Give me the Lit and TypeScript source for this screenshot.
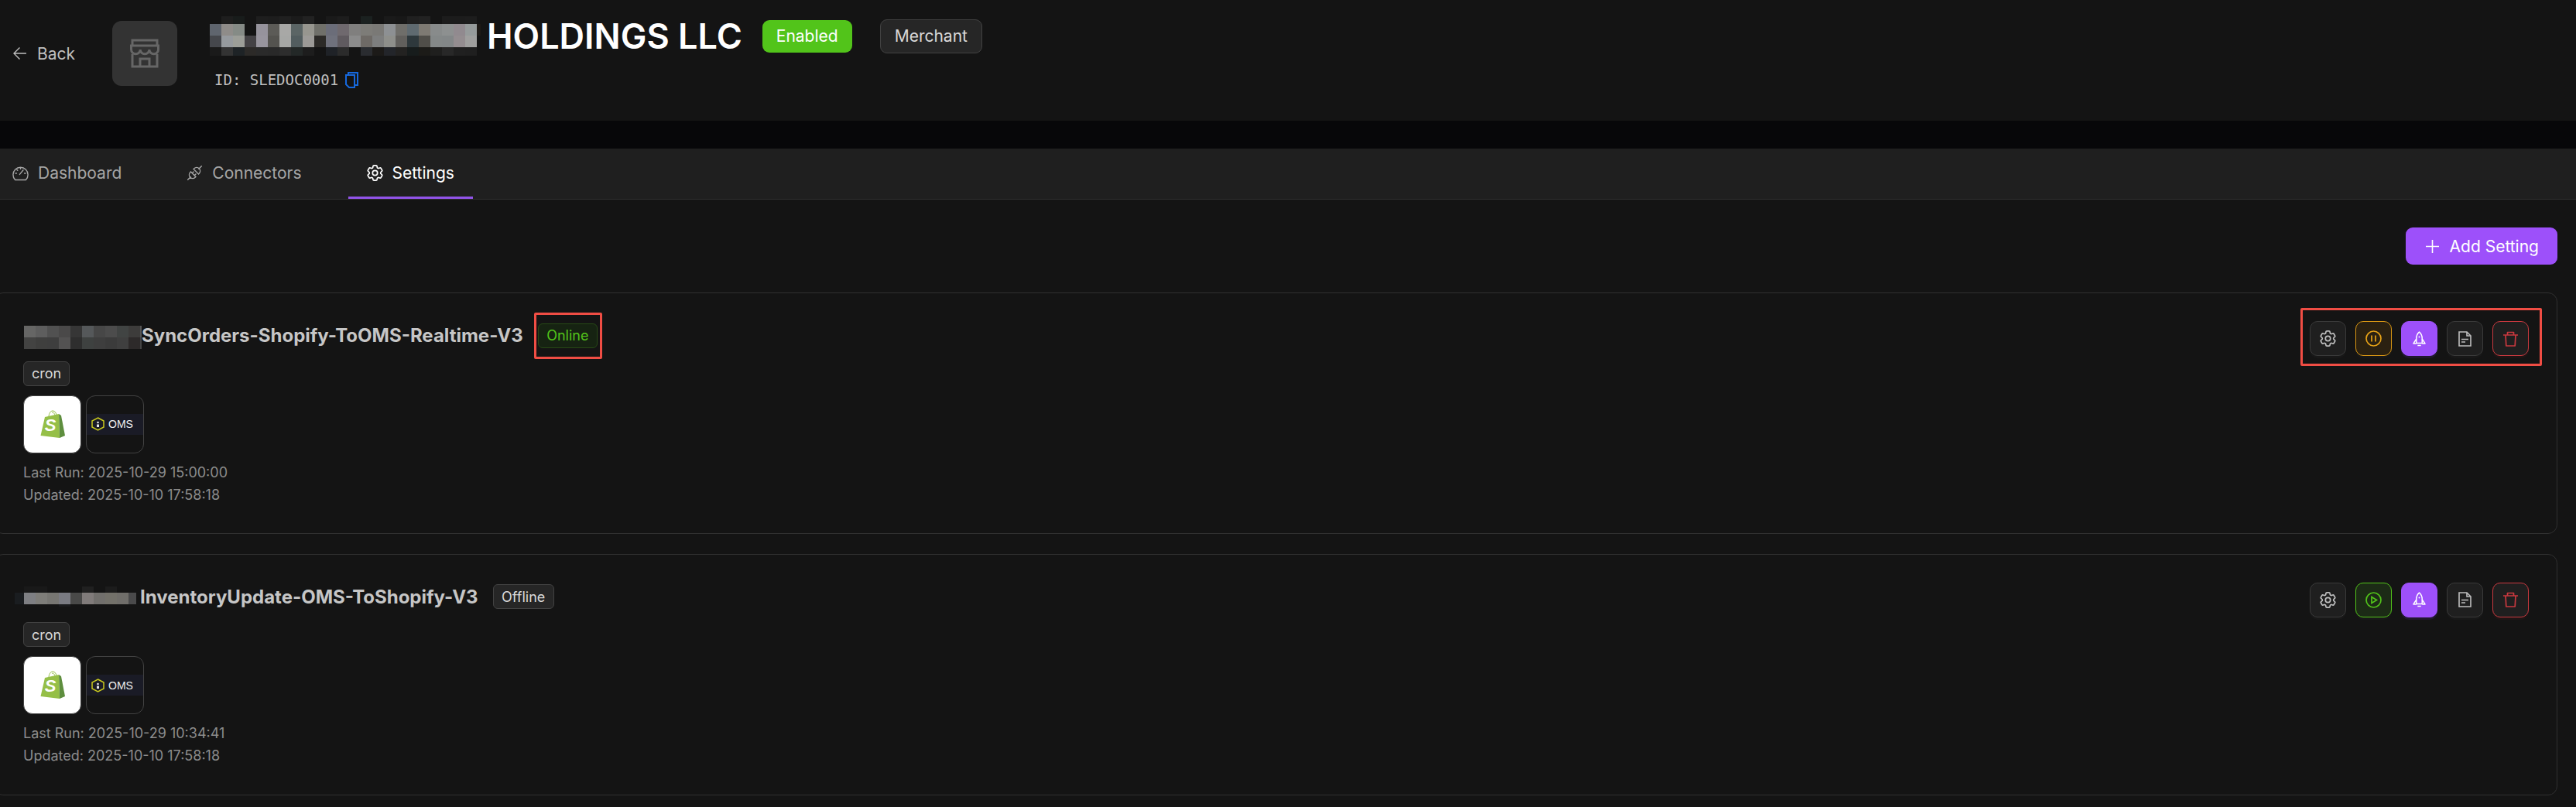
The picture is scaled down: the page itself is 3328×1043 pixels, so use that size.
import { LitElement, html, css } from "lit";
import { customElement } from "lit/decorators.js";

type Mosaic = { cols: number[]; rows: { h: number; colors: string[] }[]; ml?: number; mr?: number; mt?: number };

const __ = "transparent";
const headerMosaic: Mosaic = {
  ml: -6,
  cols: [...Array(23).fill(15), 5],
  rows: [
    { h: 10, colors: [__, "#1e1e1e", "#181c1b", __, "#1e1e1e", "#1d1d1d", "#202020", "#1b1b1b", "#222222", __, "#1a1a1a", "#1d1d1d", __, "#1b2120", __, "#1a1a1a", "#181818", "#202020", "#222222", __, "#1c1c1c", "#1c1c1c", "#1d1d1d", __] },
    { h: 15, colors: ["#5f656e", "#8f8c89", "#858b86", "#141414", "#96939c", "#5c5b57", "#a8a8a6", "#5b6565", "#97968f", "#70706a", "#6b6d79", "#6f696e", "#807f7e", "#7d7c78", "#7a7976", "#8d9093", "#6f6e6a", "#5f6a70", "#7e7a73", "#888b8b", "#8d9090", "#918a8f", "#969b9b", "#1e1a16"] },
    { h: 15, colors: ["#45474c", "#969a9e", "#9c9e98", "#444245", "#98959e", "#54534f", "#a6a7a5", "#525d5f", "#9c9a97", "#2c2a27", "#6f717c", "#5f5a5f", "#8b8b8b", "#6e6a66", "#7d7e7e", "#8e8f8b", "#615f5c", "#2e383c", "#504e49", "#848888", "#838788", "#948d90", "#9f9f9e", __] },
    { h: 11, colors: ["#1a1a1a", "#333333", "#1e2326", "#2c2a28", "#2a2a2a", "#292929", "#2d2d2d", "#232827", "#1d1d1d", __, "#1f2227", "#2b2b2b", __, "#2a2c30", "#1c1a18", "#23252a", "#232221", "#171c1c", "#1c1b18", "#1f1f1e", "#282828", "#202020", "#1f1f1f", __] },
  ],
};

const cards = [
  {
    mosaic: {
      ml: 1,
      mt: 4,
      cols: [...Array(10).fill(15), 2],
      rows: [
        { h: 15, colors: ["#666665", "#5e5e5e", "#515151", "#4a4949", "#363636", "#55585a", "#474747", "#4c4c4c", "#414443", "#3d3c3b", "#555555"] },
        { h: 15, colors: ["#434342", "#3f3f3e", "#3e3e3e", "#535252", "#2e2e2e", "#3e4140", "#3e3e3e", "#3b3b3b", "#3f3f3f", "#2d2a2a", "#444444"] },
      ],
    } as Mosaic,
    name: "SyncOrders-Shopify-ToOMS-Realtime-V3",
    online: true,
    lastRun: "2025-10-29 15:00:00",
    updated: "2025-10-10 17:58:18",
  },
  {
    mosaic: {
      ml: -11,
      mr: 5,
      cols: [12, ...Array(9).fill(15), 10],
      rows: [
        { h: 8, colors: [__, "#191919", "#191919", __, __, __, "#202020", __, "#1c1c1c", __, __] },
        { h: 15, colors: ["#1a1d20", "#7e7f83", "#7e7d79", "#777672", "#7a7b82", "#494948", "#807b7a", "#716f6c", "#73716a", "#706e6a", "#4a4a4b"] },
        { h: 3, colors: [__, __, __, __, "#1a1b1d", __, __, __, __, __, __] },
      ],
    } as Mosaic,
    name: "InventoryUpdate-OMS-ToShopify-V3",
    online: false,
    lastRun: "2025-10-29 10:34:41",
    updated: "2025-10-10 17:58:18",
  },
];

const gearPath =
  "M9.594 3.94c.09-.542.56-.94 1.11-.94h2.593c.55 0 1.02.398 1.11.94l.213 1.281c.063.374.313.686.645.87.074.04.147.083.22.127.324.196.72.257 1.075.124l1.217-.456a1.125 1.125 0 011.37.49l1.296 2.247a1.125 1.125 0 01-.26 1.431l-1.003.827c-.293.24-.438.613-.431.992a6.759 6.759 0 010 .255c-.007.378.138.75.43.99l1.005.828c.424.35.534.954.26 1.43l-1.298 2.247a1.125 1.125 0 01-1.369.491l-1.217-.456c-.355-.133-.75-.072-1.076.124a6.57 6.57 0 01-.22.128c-.331.183-.581.495-.644.869l-.213 1.28c-.09.543-.56.941-1.11.941h-2.594c-.55 0-1.02-.398-1.11-.94l-.213-1.281c-.062-.374-.312-.686-.644-.87a6.52 6.52 0 01-.22-.127c-.325-.196-.72-.257-1.076-.124l-1.217.456a1.125 1.125 0 01-1.369-.49l-1.297-2.247a1.125 1.125 0 01.26-1.431l1.004-.827c.292-.24.437-.613.43-.992a6.932 6.932 0 010-.255c.007-.378-.138-.75-.43-.99l-1.004-.828a1.125 1.125 0 01-.26-1.43l1.297-2.247a1.125 1.125 0 011.37-.491l1.216.456c.356.133.751.072 1.076-.124.072-.044.146-.087.22-.128.332-.183.582-.495.644-.869l.214-1.281z";

const gear = (size: number, sw: number) =>
  html`<svg width=${size} height=${size} viewBox="2.2 2.2 19.6 19.6" fill="none" stroke="currentColor" stroke-width=${sw} stroke-linejoin="round"><path d=${gearPath}></path><circle cx="12" cy="12" r="3"></circle></svg>`;

const dashboardIcon = html`<svg width="21" height="21" viewBox="0 0 21 21" fill="none" stroke="currentColor" stroke-width="1.4" stroke-linecap="round"><path d="M3.6 19.5A9.6 9.6 0 1 1 17.4 19.5Z"></path><path d="M9.4 12.4L14 6.8M10.5 4V5.4M4 11H5.4M15.6 11H17M5.8 6.3L6.8 7.3"></path></svg>`;
const connectorIcon = html`<svg width="21" height="21" viewBox="0 0 21 21" fill="none" stroke="currentColor" stroke-width="1.4" stroke-linecap="round"><g transform="rotate(-45 10.5 10.5)"><path d="M-2 10.5H3M18 10.5H23M8 6H6.9a4.5 4.5 0 0 0 0 9H8ZM13 6h1.1a4.5 4.5 0 0 1 0 9H13ZM8 8.5H10.5M8 12.5H10.5"></path></g></svg>`;
const pauseIcon = html`<svg width="21" height="21" viewBox="0 0 21 21" fill="none" stroke="currentColor" stroke-width="1.7"><circle cx="10.5" cy="10.5" r="9.5"></circle><path d="M8 6.5V14.5M13 6.5V14.5"></path></svg>`;
const playIcon = html`<svg width="21" height="21" viewBox="0 0 21 21" fill="none" stroke="currentColor" stroke-width="1.7"><circle cx="10.5" cy="10.5" r="9.5"></circle><path d="M8 6.5V14.5L14.5 10.5Z"></path></svg>`;
const rocketIcon = html`<svg width="17" height="20" viewBox="0 0 17 20" fill="none" stroke="currentColor" stroke-width="1.5" stroke-linejoin="round"><path d="M8.5 1C5.6 3.6 4.8 6.5 4.8 9V15.5H12.2V9C12.2 6.5 11.4 3.6 8.5 1Z"></path><path d="M4.8 10L1 15.8V16H4.8M12.2 10L16 15.8V16H12.2M6.3 18.6H10.7"></path><circle cx="8.5" cy="7.5" r="1" fill="currentColor" stroke="none"></circle></svg>`;
const docIcon = html`<svg width="17" height="20" viewBox="0 0 17 20" fill="none" stroke="currentColor" stroke-width="1.6"><path d="M1 1H11L16 6V19H1Z"></path><path d="M11 1V6H16M4 10.5H13M4 14H9"></path></svg>`;
const trashIcon = html`<svg width="19" height="20" viewBox="0 0 19 20" fill="none" stroke="currentColor" stroke-width="1.7" stroke-linejoin="round"><path d="M0 5H19M5.5 5V1.5H13.5V5M3 5L3.8 19H15.2L16 5"></path></svg>`;

const shopifyLogo = html`<svg width="32" height="37" viewBox="0 0 32 37">
  <path d="M11 9C11 4 13.5 1 16 1C19 1 21 4 21 8M15 3.5C16.5 2.5 19 4 19 8" fill="none" stroke="#95bf47" stroke-width="1"></path>
  <path d="M0.5 33L6 9L24 5L25 36Z" fill="#95bf47"></path>
  <path d="M24 5L27 7L32 33L25 36Z" fill="#5e8e3e"></path>
  <text x="13" y="27" text-anchor="middle" font-family="Liberation Sans, sans-serif" font-weight="700" font-style="italic" font-size="22" fill="#fff">S</text>
</svg>`;

const omsHex = html`<svg width="17" height="18" viewBox="0 0 17 18" fill="none"><path d="M8.5 1L16 5V13L8.5 17L1 13V5Z" stroke="#c9c91e" stroke-width="1.5"></path><circle cx="8.5" cy="7" r="1.3" fill="#e8e8e8"></circle><rect x="7" y="9.5" width="3" height="3.5" fill="#e8e8e8"></rect></svg>`;

@customElement("app-root")
export class AppRoot extends LitElement {
  static styles = css`
    :host {
      display: block;
      min-height: 1043px;
      overflow: hidden;
      background: #141414;
      font-family: Inter, "Liberation Sans", sans-serif;
      color: #d9d9d9;
    }
    .mosaic {
      display: grid;
      flex: none;
    }
    .header {
      box-sizing: border-box;
      height: 156px;
      padding: 21px 0 0 17px;
      display: flex;
      align-items: flex-start;
    }
    .back {
      display: flex;
      align-items: center;
      gap: 14px;
      width: 80px;
      height: 84px;
      margin-top: 6px;
      font-size: 21px;
      color: #bfbfbf;
    }
    .shop {
      width: 84px;
      height: 84px;
      margin: 6px 48px 0 48px;
      border-radius: 12px;
      background: #333333;
      display: flex;
      align-items: center;
      justify-content: center;
    }
    .title-row {
      display: flex;
      align-items: center;
      height: 51px;
    }
    .title {
      margin: 0 0 0 8px;
      font-size: 45px;
      font-weight: 600;
      color: #fff;
      white-space: nowrap;
    }
    .badge {
      display: flex;
      align-items: center;
      height: 42px;
      box-sizing: border-box;
      padding: 0 18px;
      border-radius: 9px;
      font-size: 21px;
    }
    .enabled {
      margin-left: 26px;
      background: #52c41a;
      color: #fff;
    }
    .merchant {
      height: 44px;
      margin-left: 36px;
      background: #262626;
      border: 1.5px solid #424242;
      color: #d9d9d9;
    }
    .id-row {
      display: flex;
      align-items: center;
      gap: 9px;
      height: 24px;
      margin-top: 19px;
      font-family: "DejaVu Sans Mono", "Liberation Mono", monospace;
      font-size: 19px;
      color: #bfbfbf;
    }
    .band {
      height: 36px;
      background: #070709;
    }
    .tabs {
      display: flex;
      height: 66px;
      box-sizing: border-box;
      background: #1f1f1f;
      border-bottom: 1px solid #303030;
    }
    .tabs-inner {
      display: flex;
      gap: 36px;
      margin-left: -8px;
    }
    .tab {
      display: flex;
      align-items: center;
      gap: 12px;
      padding: 0 24px;
      font-size: 21px;
      color: #a6a6a6;
      border-bottom: 3px solid transparent;
    }
    .tab.active {
      color: #fff;
      border-bottom-color: #9254ea;
    }
    .content {
      padding: 36px 24px 0 0;
    }
    .toolbar {
      display: flex;
      justify-content: flex-end;
      margin-bottom: 36px;
    }
    .add {
      display: flex;
      align-items: center;
      gap: 14px;
      height: 48px;
      box-sizing: border-box;
      padding: 0 24px 0 26px;
      border: none;
      border-radius: 9px;
      background: #9d50fa;
      color: #fff;
      font: 21px Inter, "Liberation Sans", sans-serif;
    }
    .cards {
      display: flex;
      flex-direction: column;
      gap: 25.5px;
      margin-left: -8px;
    }
    .card {
      display: flex;
      justify-content: space-between;
      box-sizing: border-box;
      height: 312px;
      padding: 38.5px 36px 36.5px 37px;
      border: 1px solid #303030;
      border-radius: 12px;
    }
    .name-row {
      display: flex;
      align-items: center;
      height: 32px;
    }
    .name {
      font-size: 24px;
      font-weight: 700;
      color: #c6c6c6;
      white-space: nowrap;
    }
    .status {
      position: relative;
      display: flex;
      align-items: center;
      height: 32px;
      box-sizing: border-box;
      margin-left: 19px;
      padding: 0 10.5px;
      border-radius: 6px;
      border: 1px solid #424242;
      background: #262626;
      font-size: 18px;
      color: #d9d9d9;
    }
    .status.online {
      background: #162312;
      border-color: #274916;
      color: #52c41a;
    }
    .mark {
      position: absolute;
      border: 3px solid #f04d44;
      border-radius: 2px;
      pointer-events: none;
    }
    .status .mark {
      inset: -15px -7px -15px -6px;
    }
    .cron {
      display: inline-flex;
      align-items: center;
      height: 32px;
      box-sizing: border-box;
      margin-top: 17px;
      padding: 0 10px;
      border: 1px solid #424242;
      border-radius: 6px;
      background: #262626;
      font-size: 18px;
    }
    .logos {
      display: flex;
      gap: 6px;
      margin-top: 12px;
    }
    .logo {
      width: 75px;
      height: 75px;
      box-sizing: border-box;
      border: 1.5px solid #424242;
      border-radius: 12px;
      display: flex;
      align-items: center;
      justify-content: center;
    }
    .logo.shopify {
      background: #fff;
    }
    .oms-band {
      flex: 1;
      height: 27px;
      display: flex;
      align-items: center;
      gap: 5px;
      padding-left: 6px;
      background: #1a1b26;
      color: #f0f0f0;
      font: 14px "Liberation Sans", Arial, sans-serif;
    }
    .meta {
      margin-top: 10px;
      font-size: 18px;
      line-height: 29px;
      color: #8c8c8c;
    }
    .actions {
      position: relative;
      display: flex;
      gap: 12px;
      height: 45px;
      margin-top: -2.5px;
    }
    .actions .mark {
      inset: -17px -17px -13px -12px;
    }
    .action {
      width: 47px;
      height: 45px;
      box-sizing: border-box;
      padding: 0;
      border: 1.5px solid #3a3a3a;
      border-radius: 10px;
      background: #1f1f1f;
      color: #bfbfbf;
      box-shadow: 0 3px 0 rgba(255, 255, 255, 0.02);
      display: flex;
      align-items: center;
      justify-content: center;
    }
    .action.pause {
      background: #2b2111;
      border-color: #d89614;
      color: #e8a317;
    }
    .action.play {
      background: #1c2b16;
      border-color: #52c41a;
      color: #52c41a;
    }
    .action.deploy {
      background: #9d50fa;
      border-color: #9d50fa;
      color: #fff;
      box-shadow: 0 3px 0 rgba(120, 60, 240, 0.12);
    }
    .action.remove {
      border-color: #c9393f;
      color: #c9393f;
      box-shadow: 0 3px 0 rgba(220, 50, 50, 0.06);
    }
  `;

  private renderMosaic(m: Mosaic) {
    const style = [
      `grid-template-columns:${m.cols.map((c) => c + "px").join(" ")}`,
      `grid-template-rows:${m.rows.map((r) => r.h + "px").join(" ")}`,
      `margin-left:${m.ml ?? 0}px`,
      `margin-right:${m.mr ?? 0}px`,
      `margin-top:${m.mt ?? 0}px`,
    ].join(";");
    return html`<div class="mosaic" style=${style}>
      ${m.rows.map((r) => r.colors.map((c) => html`<span style="background:${c}"></span>`))}
    </div>`;
  }

  private renderCard(c: (typeof cards)[number]) {
    return html`<section class="card">
      <div>
        <div class="name-row">
          ${this.renderMosaic(c.mosaic)}
          <span class="name">${c.name}</span>
          <span class="status ${c.online ? "online" : ""}">
            ${c.online ? "Online" : "Offline"}
            ${c.online ? html`<i class="mark"></i>` : ""}
          </span>
        </div>
        <div class="cron">cron</div>
        <div class="logos">
          <div class="logo shopify">${shopifyLogo}</div>
          <div class="logo"><div class="oms-band">${omsHex}<span>OMS</span></div></div>
        </div>
        <div class="meta">
          <div>Last Run: ${c.lastRun}</div>
          <div>Updated: ${c.updated}</div>
        </div>
      </div>
      <div class="actions">
        <button class="action">${gear(21, 1.6)}</button>
        ${c.online
          ? html`<button class="action pause">${pauseIcon}</button>`
          : html`<button class="action play">${playIcon}</button>`}
        <button class="action deploy">${rocketIcon}</button>
        <button class="action">${docIcon}</button>
        <button class="action remove">${trashIcon}</button>
        ${c.online ? html`<i class="mark"></i>` : ""}
      </div>
    </section>`;
  }

  render() {
    return html`
      <header class="header">
        <div class="back">
          <svg width="18" height="18" viewBox="0 0 18 18" fill="none" stroke="currentColor" stroke-width="1.4"><path d="M18 9H1M9 1L1 9L9 17"></path></svg>
          <span>Back</span>
        </div>
        <div class="shop">
          <svg width="38" height="38" viewBox="0 0 38 38" fill="none" stroke="#666666" stroke-width="3"><path d="M3 20V36H35V20M3 9V2H35V9M13 36V26H25V36"></path><path d="M1.5 9H36.5V14a5.8 5.8 0 0 1-11.6 0a5.8 5.8 0 0 1-11.7 0a5.8 5.8 0 0 1-11.7 0Z"></path></svg>
        </div>
        <div>
          <div class="title-row">
            ${this.renderMosaic(headerMosaic)}
            <h1 class="title">HOLDINGS LLC</h1>
            <span class="badge enabled">Enabled</span>
            <span class="badge merchant">Merchant</span>
          </div>
          <div class="id-row">
            <span>ID: SLEDOC0001</span>
            <svg width="17" height="21" viewBox="0 0 17 21" fill="none" stroke="#1668dc" stroke-width="2"><path d="M4 3V1H16V17H13"></path><path d="M1 4H12V20H5L1 16Z"></path></svg>
          </div>
        </div>
      </header>
      <div class="band"></div>
      <nav class="tabs">
        <div class="tabs-inner">
          <div class="tab">${dashboardIcon}<span>Dashboard</span></div>
          <div class="tab">${connectorIcon}<span>Connectors</span></div>
          <div class="tab active">${gear(21, 1.6)}<span>Settings</span></div>
        </div>
      </nav>
      <main class="content">
        <div class="toolbar">
          <button class="add">
            <svg width="17" height="17" viewBox="0 0 17 17" fill="none" stroke="currentColor" stroke-width="1.6"><path d="M8.5 0V17M0 8.5H17"></path></svg>
            Add Setting
          </button>
        </div>
        <div class="cards">${cards.map((c) => this.renderCard(c))}</div>
      </main>
    `;
  }
}
